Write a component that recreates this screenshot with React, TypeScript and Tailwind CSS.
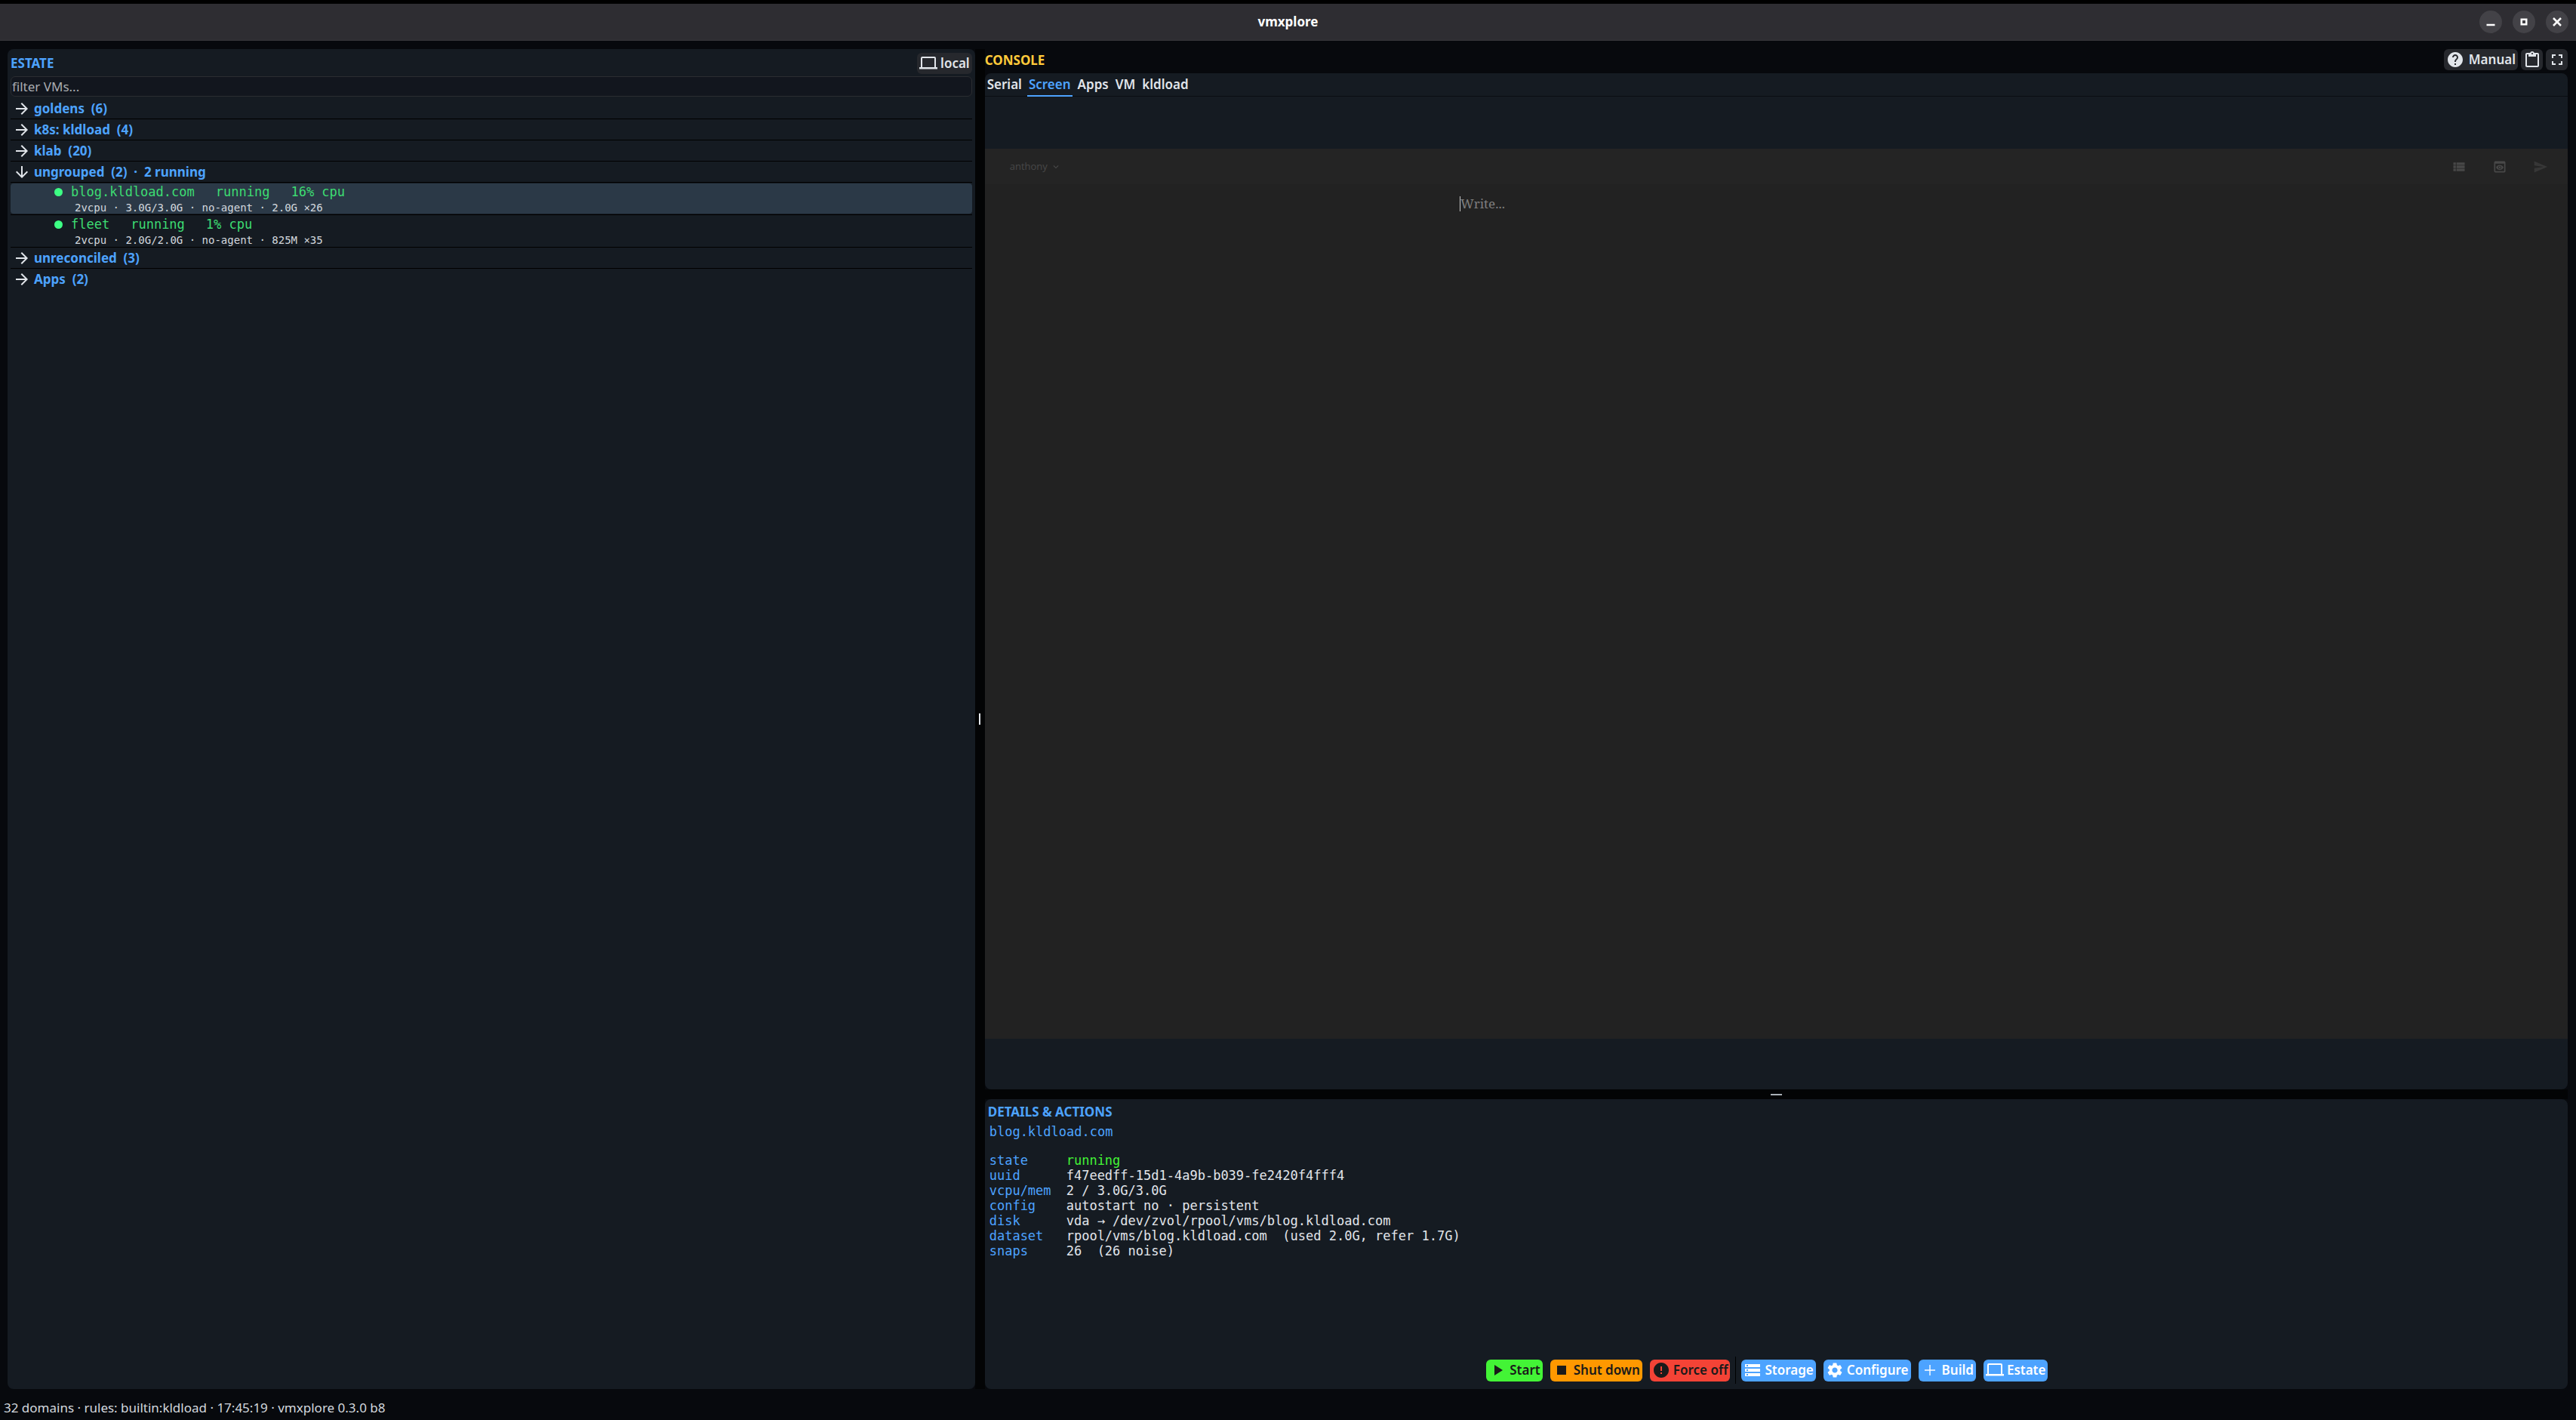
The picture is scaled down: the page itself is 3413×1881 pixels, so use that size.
import type { ReactNode } from "react";
import {
  MdArrowDownward,
  MdArrowForward,
  MdExpandMore,
  MdFullscreen,
  MdHelp,
  MdError,
  MdPlayArrow,
  MdPreview,
  MdSend,
  MdSettings,
  MdStop,
  MdStorage,
  MdViewList,
} from "react-icons/md";

type Vm = { name: string; state: string; cpu: string; info: string[]; selected?: boolean };
type Group = { name: string; count: number; note?: string; vms?: Vm[] };

const groups: Group[] = [
  { name: "goldens", count: 6 },
  { name: "k8s: kldload", count: 4 },
  { name: "klab", count: 20 },
  {
    name: "ungrouped",
    count: 2,
    note: "2 running",
    vms: [
      {
        name: "blog.kldload.com",
        state: "running",
        cpu: "16% cpu",
        info: ["2vcpu", "3.0G/3.0G", "no-agent", "2.0G ×26"],
        selected: true,
      },
      { name: "fleet", state: "running", cpu: "1% cpu", info: ["2vcpu", "2.0G/2.0G", "no-agent", "825M ×35"] },
    ],
  },
  { name: "unreconciled", count: 3 },
  { name: "Apps", count: 2 },
];

const details = [
  ["state", "running"],
  ["uuid", "f47eedff-15d1-4a9b-b039-fe2420f4fff4"],
  ["vcpu/mem", "2 / 3.0G/3.0G"],
  ["config", "autostart no · persistent"],
  ["disk", "vda → /dev/zvol/rpool/vms/blog.kldload.com"],
  ["dataset", "rpool/vms/blog.kldload.com  (used 2.0G, refer 1.7G)"],
  ["snaps", "26  (26 noise)"],
];

const tabs = ["Serial", "Screen", "Apps", "VM", "kldload"];

function LaptopIcon() {
  return (
    <svg viewBox="0 0 24 20" className="h-5 w-6" fill="currentColor" aria-hidden="true">
      <path d="M4 1h16a2 2 0 0 1 2 2v12h2v2.500H0V15h2V3a2 2 0 0 1 2-2zm0 2v12h16V3z" fillRule="evenodd" />
    </svg>
  );
}

function ClipboardIcon() {
  return (
    <svg viewBox="0 0 24 24" className="size-6" fill="currentColor" aria-hidden="true">
      <path
        d="M19 3h-4.200C14.400 1.800 13.300 1 12 1s-2.400.8-2.800 2H5c-1.100 0-2 .9-2 2v15c0 1.100.9 2 2 2h14c1.100 0 2-.9 2-2V5c0-1.100-.9-2-2-2zm-7 0c.6 0 1 .4 1 1s-.4 1-1 1-1-.4-1-1 .4-1 1-1zm7 17H5V5h2v3h10V5h2z"
        fillRule="evenodd"
      />
    </svg>
  );
}

function PlusIcon() {
  return (
    <svg viewBox="0 0 24 24" className="size-6" fill="none" stroke="currentColor" strokeWidth="1.400" aria-hidden="true">
      <path d="M12 5v14M5 12h14" />
    </svg>
  );
}

function WindowButton({ label, children }: { label: string; children: ReactNode }) {
  return (
    <button aria-label={label} className="flex size-[30px] items-center justify-center rounded-full bg-[#434247]">
      <svg viewBox="0 0 12 12" className="size-3" fill="none" stroke="white" strokeWidth="2.500">
        {children}
      </svg>
    </button>
  );
}

function ToolButton({ label, children }: { label?: string; children: ReactNode }) {
  return (
    <button
      aria-label={label}
      className="flex h-7 min-w-[29px] items-center justify-center gap-1 rounded-md bg-[#26282d] text-[17px] font-semibold text-[#e1e5ea]"
    >
      {children}
    </button>
  );
}

function ActionButton({ tone, icon, children }: { tone: string; icon: ReactNode; children: ReactNode }) {
  return (
    <button className={`flex h-[29px] items-center gap-1 rounded-md px-[3px] text-[17px] font-semibold ${tone}`}>
      {icon}
      {children}
    </button>
  );
}

function TitleBar() {
  return (
    <header className="grid h-[54px] grid-cols-[1fr_auto_1fr] items-center border-t-[5px] border-b border-t-black border-b-[#37363b] bg-[#2e2d32]">
      <span />
      <h1 className="text-[17px] font-bold text-white">vmxplore</h1>
      <div className="flex justify-end gap-[14px] pr-[10px]">
        <WindowButton label="Minimize">
          <path d="M0.500 10h11" />
        </WindowButton>
        <WindowButton label="Maximize">
          <path d="M2.750 2.750h6.500v6.500h-6.500z" />
        </WindowButton>
        <WindowButton label="Close">
          <path d="M1 1l10 10M11 1L1 11" />
        </WindowButton>
      </div>
    </header>
  );
}

function VmRow({ vm }: { vm: Vm }) {
  return (
    <li className="border-b border-black py-px">
      <button
        className={`flex h-10 w-full flex-col rounded-sm text-left font-['DejaVu_Sans_Mono',monospace] ${vm.selected ? "bg-[#2b3947]" : ""}`}
      >
        <span className="flex items-center pl-[58px] text-[17px] leading-[22px] text-[#3ddc72]">
          <span className="mr-[11px] size-[11px] rounded-full bg-[#3dff84]" />
          <span className="mr-7">{vm.name}</span>
          <span className="mr-7">{vm.state}</span>
          <span>{vm.cpu}</span>
        </span>
        <span className="pl-[85px] text-[14px] leading-5 text-[#d3d8de]">{vm.info.join(" · ")}</span>
      </button>
    </li>
  );
}

function Estate() {
  return (
    <section className="flex flex-col rounded-lg bg-[#151b22] px-1">
      <div className="flex h-9 items-center justify-between pt-[2px]">
        <h2 className="text-[17px] font-bold text-[#4da3ff]">ESTATE</h2>
        <ToolButton>
          <span className="flex items-center gap-1 px-[3px]">
            <LaptopIcon />
            local
          </span>
        </ToolButton>
      </div>
      <input
        aria-label="filter VMs"
        placeholder="filter VMs..."
        className="h-[27px] rounded-md border border-[#2b2d31] bg-[#12161e] px-px text-[17px] placeholder:text-[#a9acb0]"
      />
      <ul className="pt-[2px] text-[#4da3ff]">
        {groups.map((group) => (
          <li key={group.name} className="last:*:border-b-0">
            <button className="flex h-7 w-full items-center gap-1 border-b border-black pl-[3px] text-left text-[17px] font-bold">
              <span className="text-[24px] text-[#e1e5ea]">{group.vms ? <MdArrowDownward /> : <MdArrowForward />}</span>
              <span className="whitespace-pre">
                {`${group.name}  (${group.count})`}
                {group.note && `  ·  ${group.note}`}
              </span>
            </button>
            {group.vms && (
              <ul>
                {group.vms.map((vm) => (
                  <VmRow key={vm.name} vm={vm} />
                ))}
              </ul>
            )}
          </li>
        ))}
      </ul>
    </section>
  );
}

function Console() {
  return (
    <section className="flex min-h-0 flex-1 flex-col">
      <div className="flex h-8 items-start justify-between">
        <h2 className="text-[17px] leading-[30px] font-bold text-[#ffca3a]">CONSOLE</h2>
        <div className="flex gap-1">
          <ToolButton>
            <span className="flex items-center gap-[6px] px-[3px]">
              <MdHelp className="size-6" />
              Manual
            </span>
          </ToolButton>
          <ToolButton label="Clipboard">
            <ClipboardIcon />
          </ToolButton>
          <ToolButton label="Fullscreen">
            <MdFullscreen className="size-6" />
          </ToolButton>
        </div>
      </div>
      <div className="flex flex-1 flex-col rounded-lg bg-[#151b22]">
        <nav className="flex h-[31px] gap-[5px] border-b border-[#0a0d12] pl-px">
          {tabs.map((tab) => (
            <button
              key={tab}
              className={`-mb-px border-b-2 px-[2px] text-[17px] leading-7 font-semibold ${tab === "Screen" ? "border-[#4da3ff] text-[#4da3ff]" : "border-transparent text-[#e1e5ea]"}`}
            >
              {tab}
            </button>
          ))}
        </nav>
        <div className="flex flex-1 flex-col pt-[69px] pb-[67px]">
          <div className="flex flex-1 flex-col bg-[#222222]">
            <div className="flex h-[47px] items-center justify-between bg-[#242424] pr-[26px] pl-[33px] text-[#484848]">
              <button className="flex items-center gap-1 font-['Open_Sans',sans-serif] text-[13px]">
                anthony
                <MdExpandMore className="size-[14px]" />
              </button>
              <div className="flex items-center gap-[34px]">
                <button aria-label="Posts">
                  <MdViewList className="size-5" />
                </button>
                <button aria-label="Preview">
                  <MdPreview className="size-5" />
                </button>
                <button aria-label="Publish" className="text-[#373737]">
                  <MdSend className="size-5" />
                </button>
              </div>
            </div>
            <div className="flex flex-1 pt-4 pl-[30%]">
              <span className="h-5 w-px bg-[#c4c4c4]" />
              <textarea
                aria-label="Post"
                placeholder="Write..."
                className="flex-1 resize-none font-['Noto_Serif','Liberation_Serif',serif] text-[17px] leading-5 outline-none placeholder:text-[#7d7d7d]"
              />
            </div>
          </div>
        </div>
      </div>
    </section>
  );
}

function Details() {
  return (
    <section className="flex h-[384px] flex-col rounded-lg bg-[#151b22] pb-[7px]">
      <h2 className="px-1 pt-[5px] text-[17px] leading-6 font-bold text-[#4da3ff]">DETAILS &amp; ACTIONS</h2>
      <div className="flex-1 px-[6px] pt-1 font-['DejaVu_Sans_Mono',monospace] text-[17px] leading-5 text-[#e1e5ea]">
        <p className="pb-[18px] text-[#4da3ff]">blog.kldload.com</p>
        <dl>
          {details.map(([key, value]) => (
            <div key={key} className="flex">
              <dt className="w-[102px] text-[#4da3ff]">{key}</dt>
              <dd className={`whitespace-pre ${key === "state" ? "text-[#43f436]" : ""}`}>{value}</dd>
            </div>
          ))}
        </dl>
      </div>
      <div className="flex items-center justify-center gap-[10px] pr-6">
        <ActionButton tone="bg-[#43f436] text-[#1a1a1a]" icon={<MdPlayArrow className="size-6" />}>
          Start
        </ActionButton>
        <ActionButton tone="bg-[#ff9800] text-[#1a1a1a]" icon={<MdStop className="size-6" />}>
          Shut down
        </ActionButton>
        <ActionButton tone="bg-[#f44336] text-[#1a1a1a]" icon={<MdError className="size-6" />}>
          Force off
        </ActionButton>
        <span className="-mx-[3px] h-9 w-px bg-black" />
        <ActionButton tone="bg-[#4da3ff] text-white" icon={<MdStorage className="size-6" />}>
          Storage
        </ActionButton>
        <ActionButton tone="bg-[#4da3ff] text-white" icon={<MdSettings className="size-6" />}>
          Configure
        </ActionButton>
        <ActionButton tone="bg-[#4da3ff] text-white" icon={<PlusIcon />}>
          Build
        </ActionButton>
        <ActionButton tone="bg-[#4da3ff] text-white" icon={<LaptopIcon />}>
          Estate
        </ActionButton>
      </div>
    </section>
  );
}

export default function App() {
  return (
    <div className="flex h-screen flex-col bg-[#07090d] font-['Noto_Sans',sans-serif]">
      <TitleBar />
      <main className="grid min-h-0 flex-1 grid-cols-[11fr_13px_18fr] pt-[11px] pr-[11px] pl-[10px]">
        <Estate />
        <div className="flex items-center justify-center bg-[#030405]">
          <span className="h-[15px] w-[2px] bg-[#e1e5ea]" />
        </div>
        <div className="flex min-h-0 flex-col">
          <Console />
          <div className="flex h-[13px] items-center justify-center bg-[#030405]">
            <span className="h-[2px] w-[15px] bg-[#a9b0b6]" />
          </div>
          <Details />
        </div>
      </main>
      <footer className="flex h-[41px] items-center px-[5px] pt-[9px] text-[17px] text-[#d3d8de]">
        32 domains · rules: builtin:kldload · 17:45:19 · vmxplore 0.3.0 b8
      </footer>
    </div>
  );
}
